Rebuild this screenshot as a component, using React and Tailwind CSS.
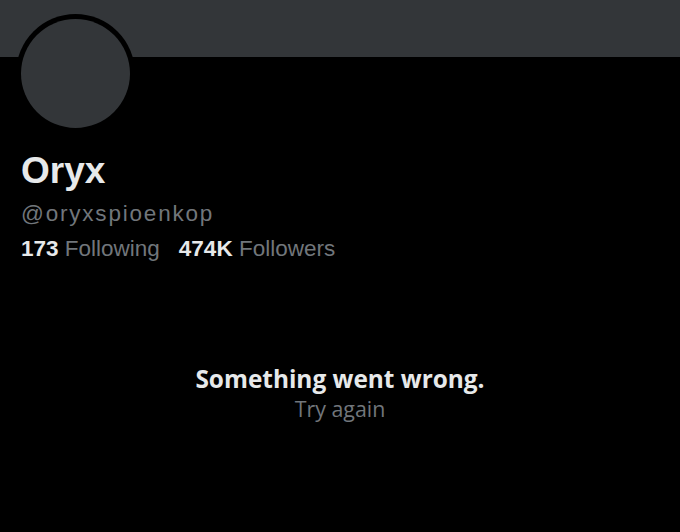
import React from "react";

const App = () => {
  return (
    <div className="w-[680px] h-[532px] bg-black overflow-hidden relative font-['Liberation_Sans',Arial,sans-serif]">
      <div className="h-[57px] bg-[#333639]"></div>

      <div className="absolute left-[16px] top-[14px] w-[119px] h-[119px] rounded-full bg-black p-[5px]">
        <div className="w-full h-full rounded-full bg-[#333639]"></div>
      </div>

      <div className="pl-[21px] pt-[93px]">
        <h1 className="text-[37px] leading-[41px] font-bold text-[#e7e9ea]">Oryx</h1>
        <p className="mt-[9px] text-[22.5px] leading-[28px] tracking-[1.8px] text-[#71767b]">
          @oryxspioenkop
        </p>
        <div className="mt-[7px] flex gap-[19px] text-[22.5px] leading-[28px]">
          <span>
            <span className="font-bold text-[#e7e9ea]">173</span>
            <span className="text-[#71767b]"> Following</span>
          </span>
          <span>
            <span className="font-bold text-[#e7e9ea]">474K</span>
            <span className="text-[#71767b]"> Followers</span>
          </span>
        </div>
      </div>

      <div className="mt-[100px] flex flex-col items-center font-['Open_Sans',sans-serif]">
        <p className="text-[24.4px] leading-[32px] font-bold text-[#e7e9ea]">Something went wrong.</p>
        <p className="text-[21.4px] leading-[28px] text-[#71767b]">Try again</p>
      </div>
    </div>
  );
};

export default App;
